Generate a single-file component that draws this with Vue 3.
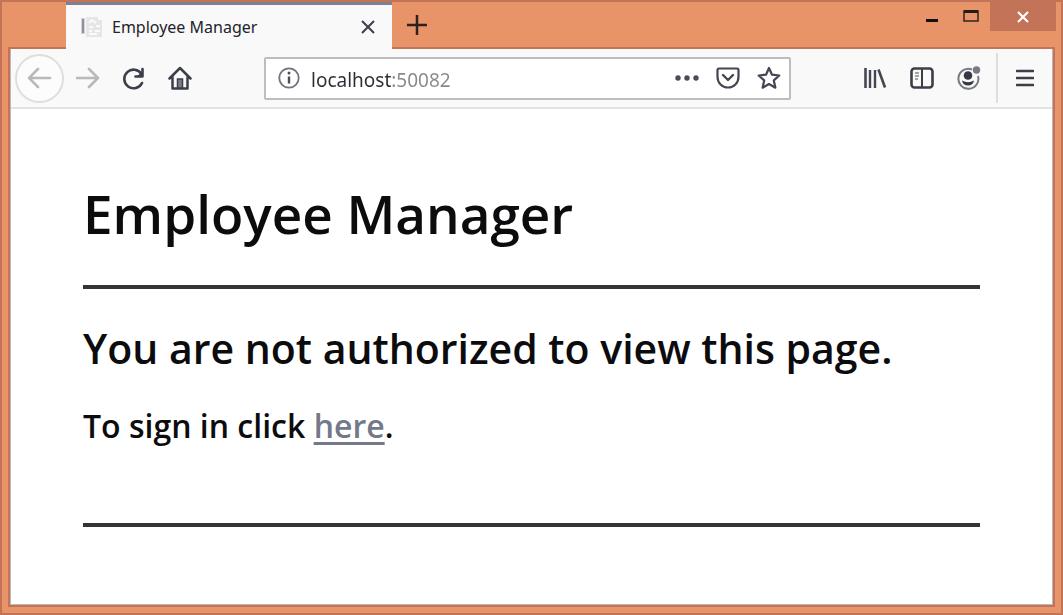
<script setup>
import { ref } from 'vue'

const address = ref('localhost:50082')
</script>

<template>
  <div class="window">
    <header class="titlebar">
      <div class="tab">
        <svg class="favicon" width="24" height="24" viewBox="0 0 24 24" aria-hidden="true">
          <path d="M1 3h4v16H1z" fill="#d4d4d6" />
          <path d="M2 4h2v14H2z" fill="#8e919c" />
          <path d="M6 2h12v3h4v17H6z" fill="#e6e6e6" />
          <path d="M9 8l3-3 4 3M9 12h4M16 11h4M9 16h3M15 16h5M9 19h8" fill="none" stroke="#fafafa" stroke-width="2" />
        </svg>
        <span class="tab-title">Employee Manager</span>
        <button class="icon-button" type="button" aria-label="Close tab">
          <svg width="16" height="16" viewBox="0 0 16 16"><path d="M2 2l12 12M14 2L2 14" fill="none" stroke="#3c3e48" stroke-width="2" /></svg>
        </button>
      </div>
      <button class="icon-button new-tab" type="button" aria-label="New tab">
        <svg width="22" height="22" viewBox="0 0 22 22"><path d="M11 1v20M1 11h20" fill="none" stroke="#2c211e" stroke-width="2.500" /></svg>
      </button>
      <div class="window-controls">
        <button class="icon-button control" type="button" aria-label="Minimize">
          <svg width="16" height="16" viewBox="0 0 16 16"><path d="M2 11h12v3H2z" fill="#15100e" /></svg>
        </button>
        <button class="icon-button control" type="button" aria-label="Maximize">
          <svg width="16" height="16" viewBox="0 0 16 16"><path d="M1 3h14v10H1z" fill="none" stroke="#30231e" stroke-width="1.500" /><path d="M1 2h14v3H1z" fill="#241a16" /></svg>
        </button>
        <button class="icon-button control-close" type="button" aria-label="Close">
          <svg width="12" height="12" viewBox="0 0 12 12"><path d="M1 1l10 10M11 1L1 11" fill="none" stroke="#fff" stroke-width="2.200" /></svg>
        </button>
      </div>
    </header>

    <div class="frame">
      <nav class="toolbar" aria-label="Navigation">
        <div class="nav-buttons">
          <button class="icon-button back" type="button" aria-label="Back">
            <svg width="24" height="22" viewBox="0 0 24 22"><path d="M22 11H1M10 2L1 11l9 9" fill="none" stroke="#bdb8b8" stroke-width="2.600" stroke-linecap="round" stroke-linejoin="round" /></svg>
          </button>
          <button class="icon-button" type="button" aria-label="Forward">
            <svg width="24" height="22" viewBox="0 0 24 22"><path d="M1 11h21M13 2l9 9-9 9" fill="none" stroke="#bdb8b8" stroke-width="2.600" stroke-linecap="round" stroke-linejoin="round" /></svg>
          </button>
          <button class="icon-button" type="button" aria-label="Reload">
            <svg width="24" height="24" viewBox="0 0 24 24"><path d="M20 17A9.300 9.300 0 1 1 19.500 8" fill="none" stroke="#3c3e48" stroke-width="2.600" stroke-linecap="round" /><path d="M20.500 3v7.500H13.500" fill="none" stroke="#3c3e48" stroke-width="2.600" stroke-linecap="round" stroke-linejoin="round" /><path d="M20.500 5v5h-5z" fill="#3c3e48" /></svg>
          </button>
          <button class="icon-button" type="button" aria-label="Home">
            <svg width="24" height="24" viewBox="0 0 24 24"><path d="M1.500 12.500L12 2l10.500 10.500M4.500 11v11.500h15V11" fill="none" stroke="#3c3e48" stroke-width="2.500" stroke-linecap="round" stroke-linejoin="round" /><path d="M9.500 22v-9h5v9z" fill="#7b7d87" stroke="#3c3e48" stroke-width="1.500" /></svg>
          </button>
        </div>

        <div class="address-bar">
          <svg width="22" height="22" viewBox="0 0 22 22" aria-hidden="true"><circle cx="11" cy="11" r="9.700" fill="none" stroke="#72747e" stroke-width="1.800" /><path d="M11 9.500v7" stroke="#4a4c56" stroke-width="2.400" /><circle cx="11" cy="6" r="1.500" fill="#4a4c56" /></svg>
          <input v-model="address" class="address" type="text" aria-label="Address" spellcheck="false" />
          <button class="icon-button" type="button" aria-label="Page actions">
            <svg width="24" height="24" viewBox="0 0 24 24" fill="#4a4c58"><circle cx="3" cy="12" r="2.700" /><circle cx="12" cy="12" r="2.700" /><circle cx="21" cy="12" r="2.700" /></svg>
          </button>
          <button class="icon-button" type="button" aria-label="Save to Pocket">
            <svg width="24" height="24" viewBox="0 0 24 24" fill="none" stroke="#444652" stroke-linecap="round" stroke-linejoin="round"><path d="M3 2.500h18q1.500 0 1.500 1.500v7a10.500 10.500 0 0 1-21 0V4q0-1.500 1.500-1.500z" stroke-width="2.200" /><path d="M7 9l5 5 5-5" stroke-width="2.400" /></svg>
          </button>
          <button class="icon-button" type="button" aria-label="Bookmark this page">
            <svg width="24" height="24" viewBox="0 0 24 24"><path d="M12 2l3 6.700 7.300.8-5.500 4.900 1.600 7.300L12 18l-6.400 3.700 1.600-7.300L1.700 9.500 9 8.700z" fill="none" stroke="#444652" stroke-width="2.200" stroke-linejoin="round" /></svg>
          </button>
        </div>

        <div class="tools">
          <button class="icon-button" type="button" aria-label="Library">
            <svg width="24" height="22" viewBox="0 0 24 22" fill="none" stroke="#444652"><path d="M2.500 1v20" stroke-width="2.600" /><path d="M7 3v18M12 3v18" stroke-width="2.400" /><path d="M15.500 2.500L22 20.500" stroke-width="2.600" /></svg>
          </button>
          <button class="icon-button" type="button" aria-label="Sidebars">
            <svg width="24" height="22" viewBox="0 0 24 22" fill="none" stroke="#3c3e48"><rect x="1.500" y="1.500" width="21" height="19" rx="3" stroke-width="2.600" /><path d="M12 2v18" stroke-width="2" /><path d="M5 6h4M5 9h4M5 12h3" stroke="#85878f" stroke-width="1.500" /></svg>
          </button>
          <button class="icon-button" type="button" aria-label="Account">
            <svg width="24" height="24" viewBox="0 0 24 24"><path d="M15 3.500A10 10 0 1 0 21 10" fill="none" stroke="#777a85" stroke-width="2" /><circle cx="11" cy="9.500" r="4.300" fill="#363842" /><path d="M5 14.500q6 3.500 12 0-1 5-6 5t-6-5z" fill="#363842" /><circle cx="19.500" cy="4" r="3.700" fill="#777a85" /></svg>
          </button>
          <button class="icon-button menu" type="button" aria-label="Open menu">
            <svg width="18" height="20" viewBox="0 0 18 20"><path d="M1 3h16M1 10h16M1 17h16" stroke="#3c3e48" stroke-width="2.600" stroke-linecap="round" /></svg>
          </button>
        </div>
      </nav>

      <main class="page">
        <h1>Employee Manager</h1>
        <hr />
        <h2>You are not authorized to view this page.</h2>
        <p>To sign in click <a href="#">here</a>.</p>
        <hr />
      </main>
    </div>
  </div>
</template>

<style>
body {
  margin: 0;
}
</style>

<style scoped>
.window {
  box-sizing: border-box;
  min-height: 100vh;
  display: flex;
  flex-direction: column;
  padding: 0 6px 6px;
  border: 2px solid #c27358;
  background: #e99368;
  font-family: "Noto Sans", "Open Sans", sans-serif;
}

.icon-button {
  display: flex;
  align-items: center;
  justify-content: center;
  padding: 0;
  border: 0;
  background: none;
}

.titlebar {
  display: flex;
  height: 45px;
}

.tab {
  z-index: 1;
  box-sizing: border-box;
  width: 326px;
  display: flex;
  align-items: center;
  margin: 0 0 -2px 58px;
  padding: 0 16px 0 14px;
  border-top: 3px solid #7b8190;
  background: #f9f9f9;
}

.tab-title {
  flex: 1;
  margin-left: 8px;
  font-size: 16px;
  line-height: 24px;
  color: #22232b;
}

.new-tab {
  width: 50px;
}

.window-controls {
  display: flex;
  align-items: flex-start;
  margin-left: auto;
}

.control {
  width: 39px;
  height: 28px;
}

.control-close {
  width: 66px;
  height: 29px;
  margin-right: -1px;
  background: #c27358;
}

.frame {
  flex: 1;
  display: flex;
  flex-direction: column;
  border: 2px solid #c27358;
  background: #fff;
  box-shadow: inset 0 0 0 1px #b9b9bb;
}

.toolbar {
  display: flex;
  align-items: center;
  height: 58px;
  margin: 0 1px;
  border-bottom: 2px solid #e2e2e2;
  background: #f9f9f9;
}

.nav-buttons {
  display: flex;
  align-items: center;
  gap: 22px;
  margin-left: 4px;
}

.back {
  box-sizing: border-box;
  width: 49px;
  height: 49px;
  margin-right: -10px;
  border: 2px solid #dedede;
  border-radius: 50%;
  background: #fcfcfc;
}

.address-bar {
  box-sizing: border-box;
  flex: 1;
  display: flex;
  align-items: center;
  gap: 17px;
  height: 43px;
  margin: 0 72px;
  padding: 0 8px 0 12px;
  border: 2px solid #bdbdbf;
  border-radius: 2px;
  background: #fff;
}

.address {
  flex: 1;
  min-width: 0;
  margin-left: -6px;
  padding: 3px 0 0;
  border: 0;
  outline: 0;
  font-family: inherit;
  font-size: 19px;
  line-height: 28px;
  color: transparent;
  caret-color: #2c2d35;
  background: linear-gradient(90deg, #2c2d35 80px, #8b8689 80px);
  background-clip: text;
}

.tools {
  display: flex;
  align-items: center;
  gap: 23px;
}

.menu {
  width: 56px;
  height: 50px;
  margin-left: -8px;
  border-left: 2px solid #dedede;
}

.page {
  padding: 68px 73px 40px;
  font-family: "Open Sans", "Noto Sans", sans-serif;
  font-weight: 600;
  color: #0c0c0e;
}

h1,
h2,
p {
  margin: 0;
  font-weight: 600;
}

h1 {
  font-size: 53px;
  line-height: 74px;
}

h2 {
  margin-top: 30px;
  font-size: 41px;
  line-height: 58px;
}

p {
  margin: 25px 0 73px;
  font-size: 32px;
  line-height: 48px;
}

hr {
  height: 4px;
  margin: 34px 0 0;
  border: 0;
  background: #343436;
}

a {
  color: #73798a;
  text-decoration-thickness: 3px;
  text-underline-offset: 4px;
}
</style>
